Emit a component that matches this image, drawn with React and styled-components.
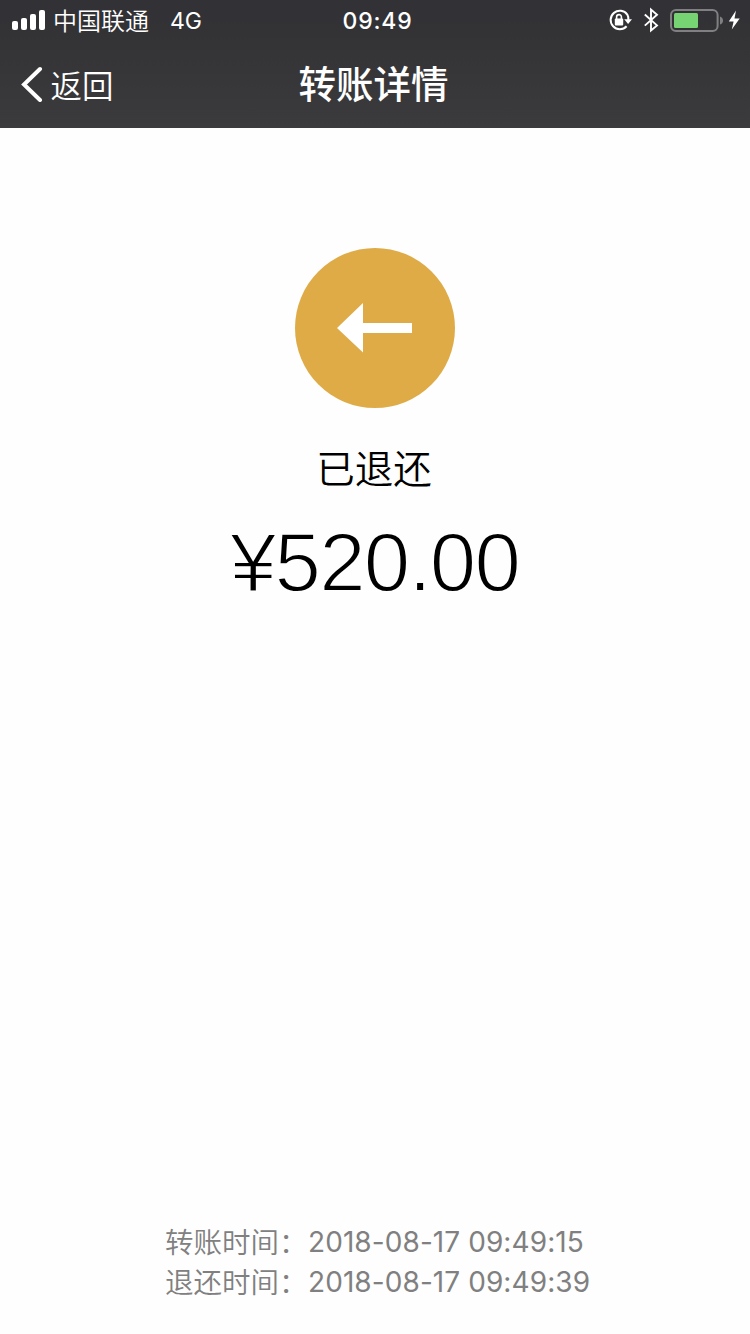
import React from 'react';
import styled, { createGlobalStyle } from 'styled-components';

const latin = 'Inter, "Noto Sans CJK SC", sans-serif';
const hans = '"Noto Sans CJK SC", sans-serif';

const GlobalStyle = createGlobalStyle`
  * { box-sizing: border-box; }
  body { margin: 0; background: #fefefe; }
`;

const Screen = styled.div`
  display: flex;
  flex-direction: column;
  width: 750px;
  height: 1334px;
  overflow: hidden;
  background: #fefefe;
  white-space: nowrap;
`;

const Header = styled.header`
  height: 128px;
  background: linear-gradient(#313136, #343436 35%, #3b3b3d);
  color: #fff;
`;

const StatusBar = styled.div`
  display: grid;
  grid-template-columns: 1fr auto 1fr;
  align-items: center;
  height: 40px;
  padding: 0 9px 0 12px;
`;

const StatusGroup = styled.div`
  display: flex;
  align-items: center;
  justify-content: ${(p) => (p.$end ? 'flex-end' : 'flex-start')};
  svg { display: block; flex: none; }
`;

const Carrier = styled.span`
  margin-left: 7px;
  font: 350 24px/40px ${hans};
`;

const Network = styled.span`
  margin-left: 21px;
  padding-top: 2px;
  font: 400 23px/38px ${latin};
`;

const Clock = styled.span`
  padding: 2px 0 0 2px;
  font: 500 23px/38px ${latin};
  letter-spacing: 0.8px;
`;

const NavBar = styled.nav`
  display: grid;
  grid-template-columns: 1fr auto 1fr;
  align-items: center;
  height: 88px;
  padding: 0 23px 0 20px;
`;

const BackButton = styled.button`
  display: flex;
  align-items: center;
  gap: 7.5px;
  padding: 0;
  border: 0;
  background: none;
  color: inherit;
  font: 350 31.5px/44px ${hans};
`;

const Title = styled.h1`
  margin: 0;
  padding-bottom: 4px;
  font: 500 37.5px/50px ${hans};
`;

const Main = styled.main`
  flex: 1;
  display: flex;
  flex-direction: column;
  align-items: center;
  padding-top: 120px;
`;

const StatusIcon = styled.div`
  width: 160px;
  height: 160px;
  border-radius: 50%;
  background: #dfab46;
  svg { display: block; }
`;

const StatusText = styled.p`
  margin: 30px 0 0;
  padding-right: 2px;
  font: 350 38.5px/56px ${hans};
  color: #000;
`;

/* The background-coloured outline trims the regular weight to a light one. */
const Amount = styled.p`
  margin: 19px 0 0;
  padding-right: 1px;
  font: 400 83.5px/98px "Liberation Sans", Arial, sans-serif;
  letter-spacing: -1.8px;
  color: #000;
  -webkit-text-stroke: 1.9px #fefefe;
`;

const Times = styled.dl`
  margin: 0;
  padding: 0 0 32px 165px;
`;

const TimeRow = styled.div`
  display: flex;
  height: 40px;
  color: #808080;
`;

const TimeLabel = styled.dt`
  width: 143px;
  font: 350 28.5px/38px ${hans};
`;

const TimeValue = styled.dd`
  margin: 0;
  font: 400 28px/40px ${latin};
  letter-spacing: 0.08px;
`;

const Signal = () => (
  <svg width="34" height="22" viewBox="0 0 34 22" fill="#fff">
    <rect x="0" y="12" width="6" height="9" rx="2" />
    <rect x="9" y="9" width="6" height="12" rx="2" />
    <rect x="18" y="5" width="6" height="16" rx="2" />
    <rect x="27" y="1" width="6" height="20" rx="2" />
  </svg>
);

const StatusIcons = () => (
  <svg width="132" height="30" viewBox="609 5 132 30" fill="none">
    <path d="M627.3 14.6A9.2 9.2 0 1 0 626.6 26.2M627.3 14.6A9.2 9.2 0 0 1 628.4 20" stroke="#fff" strokeWidth="2" />
    <path d="M624.2 19.2H632L628.1 24Z" fill="#fff" />
    <rect x="614.8" y="18.6" width="8.4" height="6.8" rx="1" fill="#fff" />
    <path d="M616.6 19v-2a2.4 2.4 0 0 1 4.8 0v2" stroke="#fff" strokeWidth="1.6" />
    <path d="M644.8 14.5L657 25.4L651 30.5V9.5L657 14.7L644.8 25.6" stroke="#fff" strokeWidth="1.9" />
    <rect x="671" y="10" width="46.6" height="21" rx="5" stroke="#808083" strokeWidth="2" />
    <rect x="674" y="13" width="24" height="15" rx="1.5" fill="#76d572" />
    <path d="M720 16.5q3 1 3 4t-3 4z" fill="#808083" />
    <path d="M736 10.5L728.8 21.5H733.6L731.8 29.5L739.7 18.5H734.5Z" fill="#fff" />
  </svg>
);

export default function App() {
  return (
    <>
      <GlobalStyle />
      <Screen>
        <Header>
          <StatusBar>
            <StatusGroup>
              <Signal />
              <Carrier>中国联通</Carrier>
              <Network>4G</Network>
            </StatusGroup>
            <Clock>09:49</Clock>
            <StatusGroup $end>
              <StatusIcons />
            </StatusGroup>
          </StatusBar>
          <NavBar>
            <BackButton>
              <svg width="23" height="36" viewBox="0 0 23 36" fill="none" stroke="#fff" strokeWidth="4" strokeLinecap="round">
                <path d="M20 3L4 18.5L20 34" />
              </svg>
              返回
            </BackButton>
            <Title>转账详情</Title>
          </NavBar>
        </Header>
        <Main>
          <StatusIcon>
            <svg width="160" height="160" viewBox="0 0 160 160" fill="#fff">
              <path d="M42 80L68 55V75H117V85H68V104.5Z" />
            </svg>
          </StatusIcon>
          <StatusText>已退还</StatusText>
          <Amount>¥520.00</Amount>
        </Main>
        <Times>
          <TimeRow>
            <TimeLabel>转账时间：</TimeLabel>
            <TimeValue>2018-08-17 09:49:15</TimeValue>
          </TimeRow>
          <TimeRow>
            <TimeLabel>退还时间：</TimeLabel>
            <TimeValue>2018-08-17 09:49:39</TimeValue>
          </TimeRow>
        </Times>
      </Screen>
    </>
  );
}
